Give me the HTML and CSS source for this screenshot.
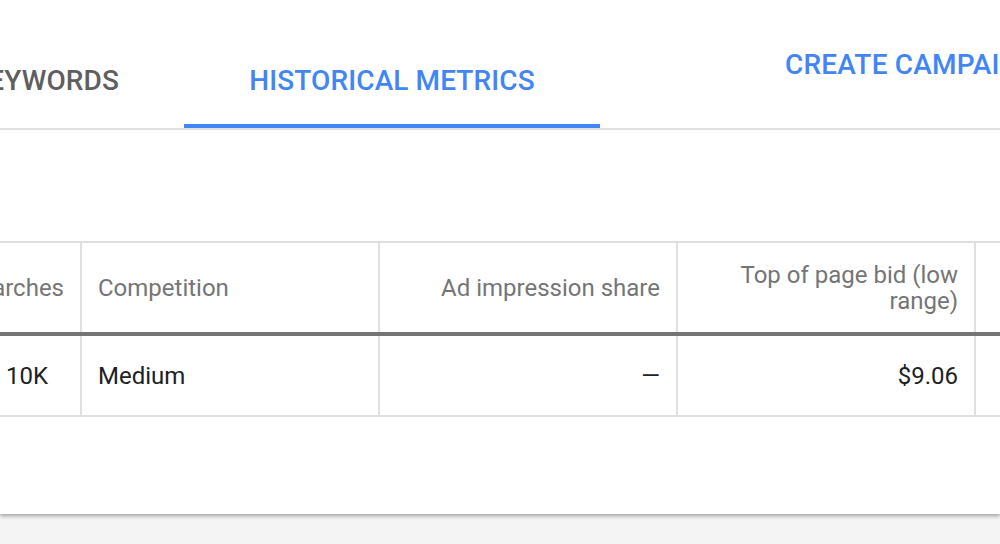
FILE: index.html
```html
<!DOCTYPE html>
<html>
<head>
<meta charset="utf-8">
<link rel="stylesheet" href="styles.css">
</head>
<body>
<div class="card">
  <div class="tabbar">
    <div class="tab tab-first">KEYWORDS</div>
    <div class="tab tab-active">HISTORICAL METRICS</div>
    <div class="action">CREATE CAMPAIGN</div>
  </div>
  <div class="table">
    <div class="row head">
      <div class="cell num">Avg. monthly searches</div>
      <div class="cell">Competition</div>
      <div class="cell num">Ad impression share</div>
      <div class="cell num">Top of page bid (low range)</div>
      <div class="cell num">Top of page bid (high range)</div>
    </div>
    <div class="row body">
      <div class="cell num first">10K</div>
      <div class="cell">Medium</div>
      <div class="cell num">—</div>
      <div class="cell num">$9.06</div>
      <div class="cell num">$20.12</div>
    </div>
  </div>
</div>
</body>
</html>
```
FILE: styles.css
```css
html, body {
  margin: 0;
  padding: 0;
  background: #f4f4f4;
  overflow: hidden;
}
body {
  font-family: Roboto, "Liberation Sans", Arial, sans-serif;
  width: 1000px;
  height: 544px;
}
.card {
  background: #ffffff;
  height: 514px;
  box-shadow: 0 2px 4px rgba(0, 0, 0, 0.35);
  overflow: hidden;
  position: relative;
}
.tabbar {
  display: flex;
  height: 128px;
  border-bottom: 2px solid #e0e0e0;
  white-space: nowrap;
}
.tab {
  box-sizing: border-box;
  height: 128px;
  display: flex;
  align-items: center;
  font-size: 28px;
  font-weight: 500;
  letter-spacing: 0.1px;
  padding-top: 32px;
}
.tab-first {
  width: 184px;
  flex: none;
  justify-content: flex-end;
  padding-right: 65px;
  color: #5f5f5f;
}
.tab-active {
  width: 416px;
  flex: none;
  justify-content: center;
  color: #4285f4;
  border-bottom: 4px solid #4285f4;
  padding-top: 36px;
}
.action {
  flex: none;
  margin-left: 185px;
  padding-top: 48px;
  font-size: 28px;
  font-weight: 500;
  letter-spacing: 0.2px;
  color: #4285f4;
}
.table {
  margin-top: 111px;
  margin-left: -216px;
  width: 1490px;
  border-top: 2px solid #e0e0e0;
  border-bottom: 2px solid #e0e0e0;
}
.row {
  display: grid;
  grid-template-columns: repeat(5, 298px);
}
.head {
  height: 93px;
  border-bottom: 4px solid #757575;
  box-sizing: border-box;
  color: #757575;
}
.body {
  height: 79px;
  color: #212121;
}
.cell {
  box-sizing: border-box;
  border-right: 2px solid #e0e0e0;
  display: flex;
  align-items: center;
  padding: 0 16px;
  font-size: 24px;
  line-height: 26px;
}
.num {
  justify-content: flex-end;
  text-align: right;
}
.first {
  padding-right: 32px;
}
```
